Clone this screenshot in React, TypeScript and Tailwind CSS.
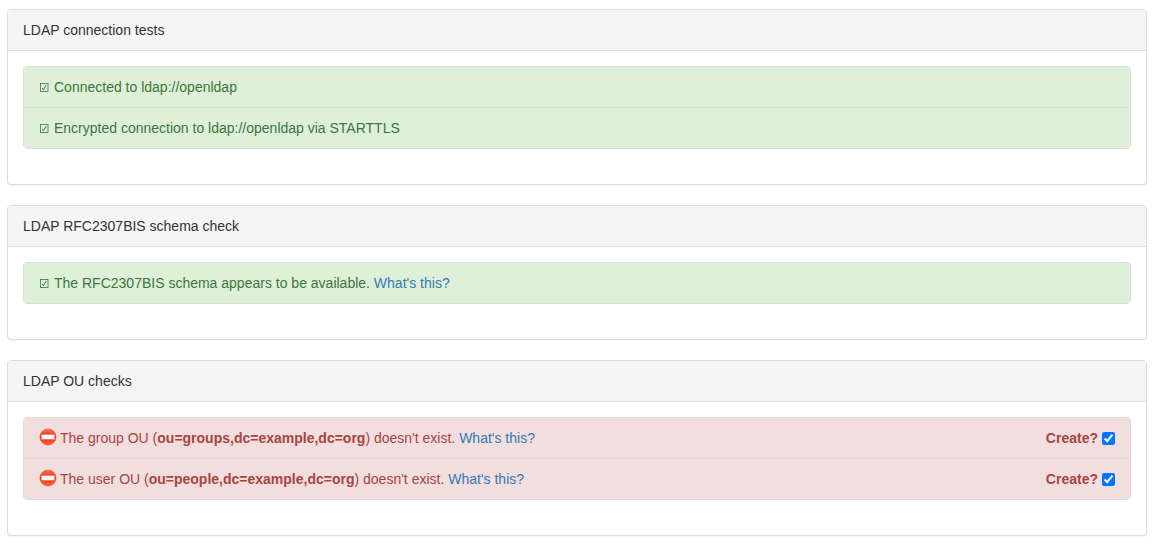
import type { ReactNode } from "react";

function TickIcon() {
  return (
    <svg viewBox="0 0 10 10" className="mr-[5px] inline-block size-[10px] align-[0px]" fill="none" stroke="currentColor" aria-hidden="true">
      <rect x="1.4" y="1.5" width="7.6" height="8" strokeWidth="0.8" />
      <path d="M3.2 6.2 4.4 7.9 7.2 3" strokeWidth="0.95" />
    </svg>
  );
}

function NoEntryIcon() {
  return (
    <svg viewBox="0 0 18 18" className="mr-[3px] inline-block size-[18px] align-[-3px]" aria-hidden="true">
      <defs>
        <linearGradient id="sign-red" x1="0" y1="0" x2="0" y2="1">
          <stop offset="0" stopColor="#ee7a5a" />
          <stop offset="0.25" stopColor="#f2502e" />
          <stop offset="0.6" stopColor="#ea2c0c" />
          <stop offset="0.85" stopColor="#ff5a36" />
          <stop offset="1" stopColor="#e8583c" />
        </linearGradient>
        <linearGradient id="sign-bar" x1="0" y1="0" x2="0" y2="1">
          <stop offset="0" stopColor="#ffffff" />
          <stop offset="1" stopColor="#f0e8e8" />
        </linearGradient>
      </defs>
      <circle cx="9" cy="9" r="8.1" fill="url(#sign-red)" stroke="#dc5238" strokeWidth="0.5" />
      <rect x="2.3" y="6.5" width="13.4" height="5" rx="0.5" fill="url(#sign-bar)" stroke="#d0604c" strokeWidth="0.4" />
    </svg>
  );
}

function HelpLink() {
  return (
    <a href="#help" className="text-[#337ab7] hover:underline">
      What's this?
    </a>
  );
}

function Panel({ title, children }: { title: string; children: ReactNode }) {
  return (
    <section className="rounded-sm border border-[#ddd] bg-white shadow-[0_1px_1px_rgba(0,0,0,0.05)]">
      <h2 className="rounded-t-[3px] border-b border-[#ddd] bg-[#f5f5f5] px-[15px] py-[10px]">{title}</h2>
      <div className="px-[15px] pt-[15px] pb-[35px]">
        <ul className="divide-y divide-[#ddd] overflow-hidden rounded-sm border border-[#ddd]">{children}</ul>
      </div>
    </section>
  );
}

function PassedItem({ children }: { children: ReactNode }) {
  return (
    <li className="bg-[#dff0d8] px-[15px] py-[10px] text-[#3c763d]">
      <TickIcon />
      {children}
    </li>
  );
}

function MissingItem({ kind, dn }: { kind: string; dn: string }) {
  const id = `create-${kind}`;
  return (
    <li className="flex items-center justify-between bg-[#f2dede] px-[15px] py-[10px] text-[#a94442]">
      <div className="h-5">
        <NoEntryIcon />
        The {kind} OU (<strong>{dn}</strong>) doesn't exist. <HelpLink />
      </div>
      <div className="flex h-5 items-center gap-1">
        <label htmlFor={id} className="font-bold">
          Create?
        </label>
        <input id={id} type="checkbox" defaultChecked className="mt-px size-[13px] accent-[#0075ff]" />
      </div>
    </li>
  );
}

export default function App() {
  return (
    <main className="flex flex-col gap-5 bg-white px-[7px] pt-[9px] pb-3 font-['Liberation_Sans',Arial,sans-serif] text-[14px] leading-5 text-[#333]">
      <Panel title="LDAP connection tests">
        <PassedItem>Connected to ldap://openldap</PassedItem>
        <PassedItem>Encrypted connection to ldap://openldap via STARTTLS</PassedItem>
      </Panel>
      <Panel title="LDAP RFC2307BIS schema check">
        <PassedItem>
          The RFC2307BIS schema appears to be available. <HelpLink />
        </PassedItem>
      </Panel>
      <Panel title="LDAP OU checks">
        <MissingItem kind="group" dn="ou=groups,dc=example,dc=org" />
        <MissingItem kind="user" dn="ou=people,dc=example,dc=org" />
      </Panel>
    </main>
  );
}
